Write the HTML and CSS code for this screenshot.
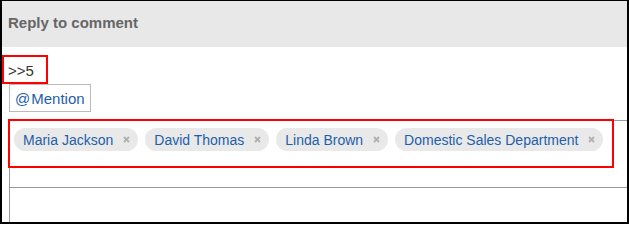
FILE: index.html
```html
<!DOCTYPE html>
<html lang="en">
<head>
<meta charset="utf-8">
<title>Reply to comment</title>
<link rel="stylesheet" href="styles.css">
</head>
<body>
<div class="frame">
  <div class="header"><h2 class="title">Reply to comment</h2></div>
  <div class="content">
    <div class="quote">&gt;&gt;5</div>
    <button class="mention" type="button"><span class="at">@</span>Mention</button>
    <div class="editor">
      <div class="tags">
        <span class="tag">Maria Jackson<svg class="x" viewBox="0 0 7 7" width="7" height="7"><path d="M1 1L6 6M6 1L1 6"/></svg></span>
        <span class="tag">David Thomas<svg class="x" viewBox="0 0 7 7" width="7" height="7"><path d="M1 1L6 6M6 1L1 6"/></svg></span>
        <span class="tag">Linda Brown<svg class="x" viewBox="0 0 7 7" width="7" height="7"><path d="M1 1L6 6M6 1L1 6"/></svg></span>
        <span class="tag">Domestic Sales Department<svg class="x" viewBox="0 0 7 7" width="7" height="7"><path d="M1 1L6 6M6 1L1 6"/></svg></span>
      </div>
      <div class="highlight"></div>
      <div class="text-area"></div>
    </div>
  </div>
</div>
</body>
</html>
```
FILE: styles.css
```css
html, body {
  margin: 0;
  padding: 0;
  background: #fff;
}
body {
  font-family: "Liberation Sans", Arial, sans-serif;
}
.frame {
  box-sizing: border-box;
  width: 629px;
  height: 224px;
  border: 2px solid #000;
  border-top-width: 1px;
  overflow: hidden;
}
.header {
  height: 46px;
  background: #e8e8e8;
  padding: 13px 0 0 6px;
  box-sizing: border-box;
}
.title {
  margin: 0;
  font-size: 15px;
  line-height: 17px;
  font-weight: bold;
  color: #666;
}
.content {
  padding-top: 8px;
}
.quote {
  box-sizing: border-box;
  width: 46px;
  height: 29px;
  border: 2px solid #f00;
  padding: 5px 0 0 4px;
  font-size: 15px;
  line-height: 17px;
  color: #333;
}
.mention {
  display: block;
  box-sizing: border-box;
  margin: 0 0 0 7px;
  width: 82px;
  height: 28px;
  border: 1px solid #bbb;
  background: #fff;
  padding: 0 0 0 5px;
  text-align: left;
  font-family: "Liberation Sans", Arial, sans-serif;
  font-size: 15px;
  line-height: 17px;
  color: #1f5fa9;
  cursor: pointer;
}
.mention .at {
  margin-right: 1px;
}
.editor {
  position: relative;
  margin: 8px 0 0 7px;
  width: 660px;
  border: 1px solid #999;
  border-bottom: none;
}
.tags {
  box-sizing: border-box;
  height: 67px;
  border-bottom: 1px solid #999;
  padding: 7px 0 0 4px;
  display: flex;
  gap: 7px;
  align-items: flex-start;
}
.tag {
  display: inline-flex;
  align-items: center;
  height: 23px;
  padding: 0 8px 0 9px;
  border-radius: 12px;
  background: #e9e9e9;
  font-size: 14px;
  color: #1f5fa9;
  white-space: nowrap;
}
.tag .x {
  margin-left: 10px;
  stroke: #b0b0b0;
  stroke-width: 1.8;
  fill: none;
}
.highlight {
  position: absolute;
  left: -2px;
  top: -2px;
  width: 606px;
  height: 49px;
  box-sizing: border-box;
  border: 2px solid #f00;
  pointer-events: none;
}
.text-area {
  height: 60px;
}
```
